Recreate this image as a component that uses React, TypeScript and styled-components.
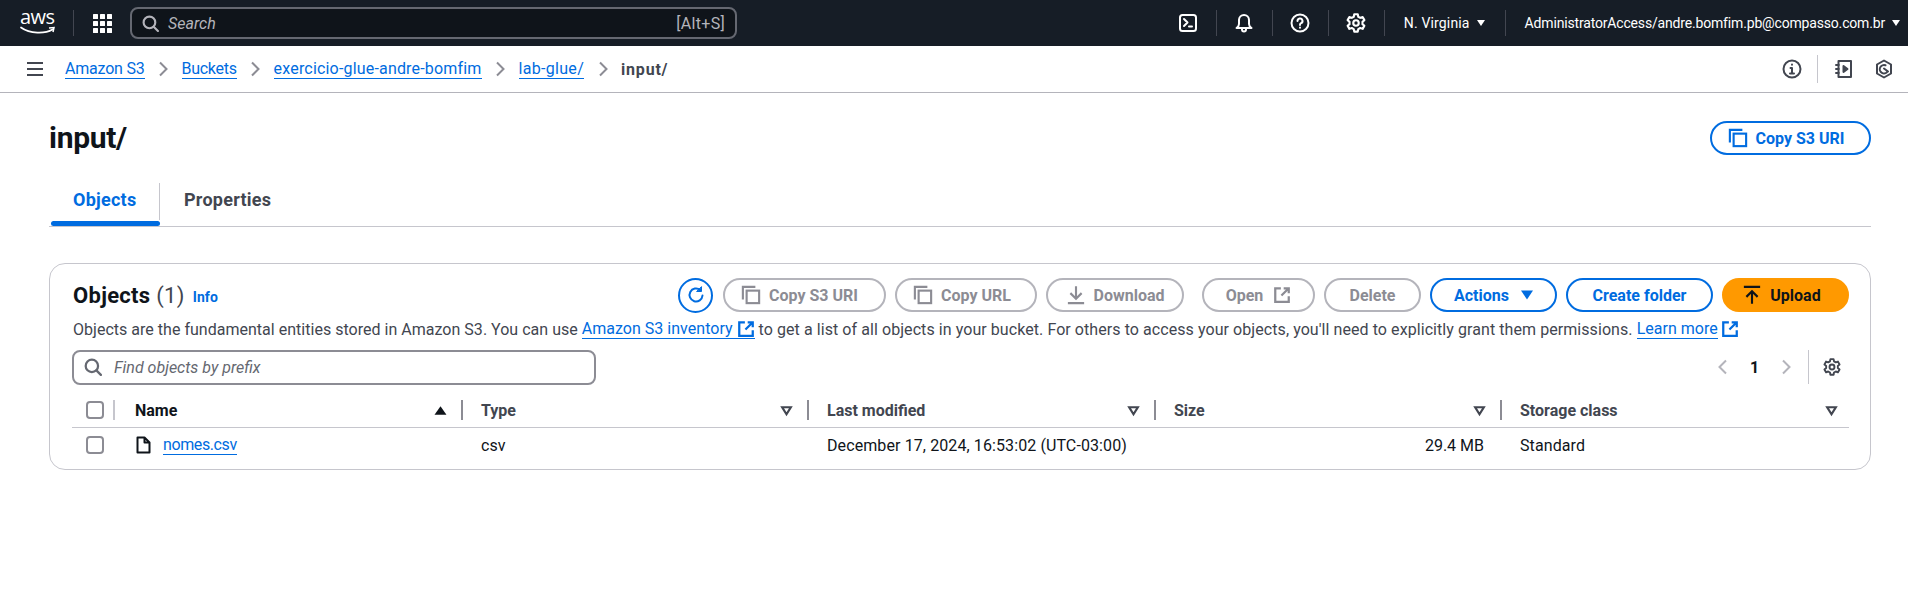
import React from "react";
import styled, { createGlobalStyle } from "styled-components";

const Global = createGlobalStyle`
  html, body { margin: 0; padding: 0; background: #fff; }
  body { font-family: Roboto, "Liberation Sans", sans-serif; font-size: 16px; color: #0f141a; width: 1908px; height: 596px; overflow: hidden; }
  * { box-sizing: border-box; }
`;

const blue = "#006ce0";

const TopBar = styled.header`
  height: 46px; background: #161d26; display: flex; align-items: center; color: #fff;
`;
const LogoWrap = styled.div`
  width: 73px; padding-left: 20px; display: flex; flex-direction: column; align-items: flex-start; height: 34px;
`;
const LogoText = styled.span`
  font-family: "Open Sans", sans-serif; font-size: 20px; line-height: 20px; letter-spacing: -0.6px; color: #fff; margin-top: 1px;
`;
const LogoSmile = styled.svg`
  width: 36px; height: 10px; margin-top: -1px; display: block;
`;
const TopSep = styled.span`
  width: 1px; height: 26px; background: #424650; flex: none;
`;
const GridBtn = styled.div`
  width: 56px; display: flex; justify-content: center;
`;
const SearchBox = styled.div`
  width: 607px; height: 32px; background: #0f141a; border: 2px solid #656871; border-radius: 8px; display: flex; align-items: center; padding: 0 10px; gap: 9px; color: #b4b4bb;
`;
const SearchHint = styled.span`
  font-style: italic; flex: 1; color: #b4b4bb;
`;
const AltKey = styled.span`
  letter-spacing: 0.3px; color: #b4b4bb;
`;
const TopRight = styled.div`
  margin-left: auto; display: flex; align-items: center; height: 100%;
`;
const TopIcon = styled.div`
  width: 55px; display: flex; justify-content: center; color: #fff;
`;
const Region = styled.div`
  display: flex; align-items: center; gap: 7px; padding: 0 20px 0 19px; font-size: 14px; letter-spacing: 0.15px; color: #fff;
`;
const Account = styled.div`
  display: flex; align-items: center; gap: 7px; padding: 0 8px 0 19px; font-size: 14px; letter-spacing: -0.17px; color: #fff;
`;
const Caret = styled.span`
  width: 0; height: 0; border-left: 4.5px solid transparent; border-right: 4.5px solid transparent; border-top: 6.5px solid currentColor; display: inline-block; flex: none;
`;

const NavBar = styled.nav`
  height: 47px; border-bottom: 1.5px solid #b4b4bb; display: flex; align-items: center; padding-left: 26px;
`;
const Burger = styled.div`
  width: 39px; display: flex; color: #424650;
`;
const Crumbs = styled.div`
  display: flex; align-items: center;
`;
const Crumb = styled.a<{ $track: number }>`
  color: ${blue}; text-decoration: none; border-bottom: 1px solid ${blue}; line-height: 19px; letter-spacing: ${(p) => p.$track}px;
`;
const CrumbSep = styled.span`
  width: 37px; display: flex; justify-content: center; color: #8c8c94;
`;
const CrumbNow = styled.span`
  color: #424650; font-weight: 700; letter-spacing: 0.8px;
`;
const NavRight = styled.div`
  margin-left: auto; display: flex; align-items: center; color: #424650; padding-right: 2px;
`;
const NavIcon = styled.div`
  width: 36px; display: flex; justify-content: center;
`;
const NavIconWide = styled.div`
  width: 44px; display: flex; justify-content: center;
`;
const NavSep = styled.span`
  width: 1px; height: 28px; background: #c6c6cd; margin: 0 8px 0 7px;
`;

const Main = styled.main`
  padding: 0 37px 0 49px;
`;
const TitleRow = styled.div`
  height: 70px; padding-top: 20px; display: flex; align-items: center; justify-content: space-between;
`;
const Title = styled.h1`
  margin: 0; font-size: 30px; font-weight: 700; line-height: 36px; letter-spacing: -0.3px;
`;
const Btn = styled.button<{ $variant?: "normal" | "disabled" | "primary"; $w: number; $gap?: number; $after?: number; $shift?: number }>`
  width: ${(p) => p.$w}px; height: 34px; flex: none; border-radius: 20px; font-family: inherit; font-size: 16px; font-weight: 700;
  display: inline-flex; align-items: center; justify-content: center; gap: ${(p) => p.$gap ?? 8}px; padding: 0 ${(p) => p.$shift ?? 0}px 0 0;
  margin-right: ${(p) => p.$after ?? 0}px;
  background: ${(p) => (p.$variant === "primary" ? "#ff9900" : "#fff")};
  color: ${(p) => (p.$variant === "disabled" ? "#8c8c94" : p.$variant === "primary" ? "#0f141a" : blue)};
  border: 2px solid ${(p) => (p.$variant === "disabled" ? "#b4b4bb" : p.$variant === "primary" ? "#ff9900" : blue)};
`;
const Tabs = styled.div`
  height: 50px; margin-top: 14px; border-bottom: 1px solid #c6c6cd; display: flex;
`;
const Tab = styled.div<{ $active?: boolean }>`
  height: 49px; display: flex; align-items: center; font-weight: 700; font-size: 18px; letter-spacing: 0.25px; position: relative;
  padding: 0 0 5px 24px;
  width: ${(p) => (p.$active ? "111px" : "auto")};
  color: ${(p) => (p.$active ? blue : "#424650")};
  ${(p) =>
    p.$active
      ? `&::before { content: ""; position: absolute; right: 0; top: 6px; bottom: 6px; width: 1px; background: #c6c6cd; }
         &::after { content: ""; position: absolute; left: 2px; right: 0; bottom: 0; height: 5px; background: ${blue}; border-radius: 3px; }`
      : ""}
`;

const Card = styled.section`
  margin-top: 36px; height: 207px; border: 1px solid #c6c6cd; border-radius: 16px; padding: 14px 21px 0 22px;
`;
const CardHead = styled.div`
  display: flex; align-items: center; height: 34px; padding-left: 1px;
`;
const CardTitle = styled.h2`
  margin: 0; font-size: 22px; font-weight: 700; letter-spacing: 0.3px;
`;
const Count = styled.span`
  font-weight: 400; color: #424650;
`;
const InfoLink = styled.a`
  font-size: 14px; font-weight: 700; color: ${blue}; margin-left: 8px; margin-top: 3px; letter-spacing: 0.1px;
`;
const Actions = styled.div`
  margin-left: auto; display: flex; align-items: center; gap: 9px;
`;
const RoundBtn = styled.button`
  width: 35px; height: 35px; border-radius: 50%; background: #fff; border: 2px solid ${blue}; color: ${blue}; padding: 0; display: flex; align-items: center; justify-content: center; margin-right: 1px;
`;
const Desc = styled.p`
  margin: 0; height: 34px; padding-left: 1px; display: flex; align-items: center; white-space: pre; color: #424650; font-size: 16px; letter-spacing: 0.02px;
`;
const DescMiddle = styled.span`
  letter-spacing: 0.07px;
`;
const ExtLink = styled.a`
  color: ${blue}; text-decoration: none; display: inline-flex; align-items: center; gap: 0; border-bottom: 1px solid ${blue}; line-height: 19px;
`;
const ExtIconLink = styled.span`
  color: ${blue}; display: inline-flex; margin-left: 3px;
`;
const FilterRow = styled.div`
  display: flex; align-items: center; justify-content: space-between; height: 36px; margin-top: 3px;
`;
const FilterBox = styled.div`
  width: 524px; height: 35px; border: 2px solid #8c8c94; border-radius: 8px; display: flex; align-items: center; padding: 0 10px; gap: 12px; color: #656871;
`;
const FilterHint = styled.span`
  font-style: italic; color: #656871;
`;
const Pager = styled.div`
  display: flex; align-items: center; height: 36px;
`;
const PageNum = styled.span`
  font-weight: 700; width: 47px; text-align: center; color: #0f141a;
`;
const PagerSep = styled.span`
  width: 1px; height: 34px; background: #c6c6cd; margin: 0 14px 0 14px;
`;
const PageArrow = styled.span`
  color: #b4b4bb; display: flex;
`;
const PagerGear = styled.span`
  color: #424650; display: flex; margin-right: 8px;
`;
const TableRow = styled.div<{ $head?: boolean }>`
  display: grid; grid-template-columns: 43px 348px 346px 347px 346px 347px;
  height: ${(p) => (p.$head ? "35px" : "34px")}; margin-top: ${(p) => (p.$head ? "8px" : "0")};
  ${(p) => (p.$head ? "border-bottom: 1px solid #c6c6cd;" : "")}
`;
const HeadCell = styled.div<{ $dark?: boolean }>`
  display: flex; align-items: center; font-weight: 700; padding-left: ${(p) => (p.$dark ? "20px" : "18px")}; color: ${(p) => (p.$dark ? "#0f141a" : "#424650")};
`;
const HeadLabel = styled.span`
  flex: 1;
`;
const SortIcon = styled.span<{ $dark?: boolean; $end?: boolean }>`
  display: flex; margin-right: ${(p) => (p.$end ? "11px" : "14px")}; color: ${(p) => (p.$dark ? "#0f141a" : "#424650")};
`;
const ColSep = styled.span<{ $thin?: boolean }>`
  width: 2px; height: 20px; background: ${(p) => (p.$thin ? "#c6c6cd" : "#8c8c94")}; flex: none; margin-left: ${(p) => (p.$thin ? "auto" : "0")};
`;
const CheckCell = styled.div`
  display: flex; align-items: center; padding-left: 14px;
`;
const Check = styled.span`
  width: 18px; height: 18px; border: 2px solid #8c8c94; border-radius: 4px; background: #fff; display: block;
`;
const Cell = styled.div<{ $right?: boolean; $name?: boolean }>`
  display: flex; align-items: center; padding-left: ${(p) => (p.$name ? "20px" : "18px")}; gap: 11px; color: #0f141a; letter-spacing: 0.1px;
  ${(p) => (p.$right ? "justify-content: flex-end; padding-right: 18px; letter-spacing: 0;" : "")}
`;
const FileLink = styled.a`
  color: ${blue}; border-bottom: 1px solid ${blue}; line-height: 19px; letter-spacing: -0.4px;
`;

const S = { fill: "none", stroke: "currentColor", strokeWidth: 2, strokeLinecap: "round" as const, strokeLinejoin: "round" as const };

const Copy = () => (
  <svg width="20" height="20" viewBox="0 0 16 16" {...S} strokeWidth={1.7} strokeLinecap="butt" strokeLinejoin="miter">
    <path d="M1.5 11.5V1.5h10" />
    <rect x="4.5" y="4.5" width="10" height="10" />
  </svg>
);
const Ext = ({ size = 18 }: { size?: number }) => (
  <svg width={size} height={size} viewBox="0 0 16 16" {...S} strokeLinecap="butt" strokeLinejoin="miter">
    <path d="M7 2H2v12h12V9M9.5 2H14v4.5M14 2L7.5 8.5" />
  </svg>
);
const Search = ({ size = 16 }: { size?: number }) => (
  <svg width={size} height={size} viewBox="0 0 16 16" {...S}>
    <circle cx="7" cy="7" r="5.5" />
    <path d="M11 11l4 4" />
  </svg>
);
const Gear = ({ size = 18 }: { size?: number }) => (
  <svg width={size} height={size} viewBox="0 0 16 16" {...S} strokeWidth={1.7}>
    <circle cx="8" cy="8" r="2.2" />
    <path d="M6.6 1h2.8l.4 2 1.6.9 1.9-.7 1.4 2.5-1.5 1.3v1.9l1.5 1.3-1.4 2.5-1.9-.7-1.6.9-.4 2H6.6l-.4-2-1.6-.9-1.9.7-1.4-2.5 1.5-1.3V7L1.3 5.7l1.4-2.5 1.9.7 1.6-.9z" />
  </svg>
);
const Chevron = ({ dir = "right", size = 16 }: { dir?: "left" | "right"; size?: number }) => (
  <svg width={size} height={size} viewBox="0 0 16 16" {...S} strokeLinecap="butt" strokeLinejoin="miter">
    <path d={dir === "right" ? "M5 1.5L11.5 8 5 14.5" : "M11 1.5L4.5 8 11 14.5"} />
  </svg>
);
const FilterTri = () => (
  <svg width="13" height="13" viewBox="0 0 12 12" fill="none" stroke="currentColor" strokeWidth="2" strokeLinejoin="miter">
    <path d="M2 3h8L6 9.5z" />
  </svg>
);

const Columns = ["Type", "Last modified", "Size"];

export default function App() {
  return (
    <>
      <Global />
      <TopBar>
        <LogoWrap>
          <LogoText>aws</LogoText>
          <LogoSmile viewBox="0 0 36 10" fill="none">
            <path d="M1 1.5C10 8 25 8 32.5 3.5" stroke="#fff" strokeWidth="1.7" strokeLinecap="round" />
            <path d="M29 2l5-.5-1 4.5" stroke="#fff" strokeWidth="1.5" />
          </LogoSmile>
        </LogoWrap>
        <TopSep />
        <GridBtn>
          <svg width="19" height="19" viewBox="0 0 19 19" fill="#fff">
            {[0, 7, 14].flatMap((y) =>
              [0, 7, 14].map((x) => <rect key={`${x}-${y}`} x={x} y={y} width="5" height="5" rx=".5" />)
            )}
          </svg>
        </GridBtn>
        <SearchBox>
          <Search size={17} />
          <SearchHint>Search</SearchHint>
          <AltKey>[Alt+S]</AltKey>
        </SearchBox>
        <TopRight>
          <TopIcon>
            <svg width="20" height="20" viewBox="0 0 20 20" {...S}>
              <rect x="2" y="2" width="16" height="16" rx="2.5" />
              <path d="M6 6l3.5 3.5L6 13M11 13.5h3" />
            </svg>
          </TopIcon>
          <TopSep />
          <TopIcon>
            <svg width="20" height="20" viewBox="0 0 20 20" {...S}>
              <path d="M2.5 15h15c-1.8-1.2-2.5-2.5-2.5-4V7a5 5 0 0 0-10 0v4c0 1.5-.7 2.8-2.5 4zM8 15.5v1a2 2 0 0 0 4 0v-1" />
            </svg>
          </TopIcon>
          <TopSep />
          <TopIcon>
            <svg width="20" height="20" viewBox="0 0 20 20" {...S}>
              <circle cx="10" cy="10" r="8.5" />
              <path d="M7.5 8a2.5 2.5 0 1 1 3.6 2.2c-.8.4-1.1 1-1.1 1.8M10 14.5v.2" />
            </svg>
          </TopIcon>
          <TopSep />
          <TopIcon>
            <Gear size={20} />
          </TopIcon>
          <TopSep />
          <Region>
            N. Virginia <Caret />
          </Region>
          <TopSep />
          <Account>
            AdministratorAccess/andre.bomfim.pb@compasso.com.br <Caret />
          </Account>
        </TopRight>
      </TopBar>
      <NavBar>
        <Burger>
          <svg width="18" height="16" viewBox="0 0 18 16" fill="currentColor">
            <rect x="1" y="1" width="16" height="2" />
            <rect x="1" y="7" width="16" height="2" />
            <rect x="1" y="13" width="16" height="2" />
          </svg>
        </Burger>
        <Crumbs>
          <Crumb $track={-0.2}>Amazon S3</Crumb>
          <CrumbSep><Chevron /></CrumbSep>
          <Crumb $track={-0.3}>Buckets</Crumb>
          <CrumbSep><Chevron /></CrumbSep>
          <Crumb $track={0.18}>exercicio-glue-andre-bomfim</Crumb>
          <CrumbSep><Chevron /></CrumbSep>
          <Crumb $track={0.3}>lab-glue/</Crumb>
          <CrumbSep><Chevron /></CrumbSep>
          <CrumbNow>input/</CrumbNow>
        </Crumbs>
        <NavRight>
          <NavIcon>
            <svg width="20" height="20" viewBox="0 0 20 20" {...S}>
              <circle cx="10" cy="10" r="8.5" />
              <path d="M10 9v5.5M8 14.5h4M8.5 9H10M10 5.5v.2" />
            </svg>
          </NavIcon>
          <NavSep />
          <NavIcon>
            <svg width="20" height="20" viewBox="0 0 20 20" {...S}>
              <path d="M4.5 2H17v16H4.5zM2 6h3M2 10h3M2 14h3" />
              <path d="M9.5 7l4 3-4 3z" fill="currentColor" />
            </svg>
          </NavIcon>
          <NavIconWide>
            <svg width="20" height="20" viewBox="0 0 20 20" {...S}>
              <path d="M10 1.5l7 4v9l-7 4-7-4v-9z" />
              <path d="M13.5 12.5a4.2 4.2 0 1 1-2-6.2" />
              <path d="M10 9.5l4 3" />
            </svg>
          </NavIconWide>
        </NavRight>
      </NavBar>
      <Main>
        <TitleRow>
          <Title>input/</Title>
          <Btn $w={161} $shift={9}>
            <Copy />
            Copy S3 URI
          </Btn>
        </TitleRow>
        <Tabs>
          <Tab $active>Objects</Tab>
          <Tab>Properties</Tab>
        </Tabs>
        <Card>
          <CardHead>
            <CardTitle>
              Objects <Count>(1)</Count>
            </CardTitle>
            <InfoLink>Info</InfoLink>
            <Actions>
              <RoundBtn>
                <svg width="20" height="20" viewBox="0 0 20 20" {...S}>
                  <path d="M16.5 10.5a6.5 6.5 0 1 1-2.3-5.5" />
                  <path d="M15.5 2v4.5H11z" fill="currentColor" strokeWidth={1} />
                </svg>
              </RoundBtn>
              <Btn $variant="disabled" $w={163} $shift={10}><Copy />Copy S3 URI</Btn>
              <Btn $variant="disabled" $w={142} $shift={8}><Copy />Copy URL</Btn>
              <Btn $variant="disabled" $w={138} $after={9}>
                <svg width="20" height="20" viewBox="0 0 16 16" {...S} strokeWidth={1.7} strokeLinecap="butt" strokeLinejoin="miter">
                  <path d="M8 1v9.5M3.5 6.5L8 11l4.5-4.5M1.5 14.5h13" />
                </svg>
                Download
              </Btn>
              <Btn $variant="disabled" $w={113} $gap={10}>Open <Ext /></Btn>
              <Btn $variant="disabled" $w={97}>Delete</Btn>
              <Btn $w={127}>
                Actions
                <svg width="12" height="10" viewBox="0 0 12 10" fill="currentColor" style={{ marginLeft: 4 }}>
                  <path d="M0 .5h12L6 9.5z" />
                </svg>
              </Btn>
              <Btn $w={147}>Create folder</Btn>
              <Btn $variant="primary" $w={127} $shift={8}>
                <svg width="20" height="20" viewBox="0 0 16 16" {...S} strokeWidth={1.7} strokeLinecap="butt" strokeLinejoin="miter">
                  <path d="M1.5 1.5h13M8 15V5M3.5 9.5L8 5l4.5 4.5" />
                </svg>
                Upload
              </Btn>
            </Actions>
          </CardHead>
          <Desc>
            Objects are the fundamental entities stored in Amazon S3. You can use <ExtLink>Amazon S3 inventory <Ext /></ExtLink><DescMiddle> to get a list of all objects in your bucket. For others to access your objects, you'll need to explicitly grant them permissions. </DescMiddle><ExtLink>Learn more</ExtLink><ExtIconLink><Ext /></ExtIconLink>
          </Desc>
          <FilterRow>
            <FilterBox>
              <Search size={18} />
              <FilterHint>Find objects by prefix</FilterHint>
            </FilterBox>
            <Pager>
              <PageArrow><Chevron dir="left" /></PageArrow>
              <PageNum>1</PageNum>
              <PageArrow><Chevron /></PageArrow>
              <PagerSep />
              <PagerGear><Gear /></PagerGear>
            </Pager>
          </FilterRow>
          <TableRow $head>
            <CheckCell>
              <Check />
              <ColSep $thin />
            </CheckCell>
            <HeadCell $dark>
              <HeadLabel>Name</HeadLabel>
              <SortIcon $dark>
                <svg width="13" height="13" viewBox="0 0 12 12" fill="currentColor"><path d="M6 2l5.5 8H.5z" /></svg>
              </SortIcon>
              <ColSep />
            </HeadCell>
            {Columns.map((c) => (
              <HeadCell key={c}>
                <HeadLabel>{c}</HeadLabel>
                <SortIcon><FilterTri /></SortIcon>
                <ColSep />
              </HeadCell>
            ))}
            <HeadCell>
              <HeadLabel>Storage class</HeadLabel>
              <SortIcon $end><FilterTri /></SortIcon>
            </HeadCell>
          </TableRow>
          <TableRow>
            <CheckCell><Check /></CheckCell>
            <Cell $name>
              <svg width="17" height="18" viewBox="0 0 16 18" {...S} color="#0f141a">
                <path d="M2 1.5h7l5 5v10H2zM9 1.5v5h5" />
              </svg>
              <FileLink>nomes.csv</FileLink>
            </Cell>
            <Cell>csv</Cell>
            <Cell>December 17, 2024, 16:53:02 (UTC-03:00)</Cell>
            <Cell $right>29.4 MB</Cell>
            <Cell>Standard</Cell>
          </TableRow>
        </Card>
      </Main>
    </>
  );
}
